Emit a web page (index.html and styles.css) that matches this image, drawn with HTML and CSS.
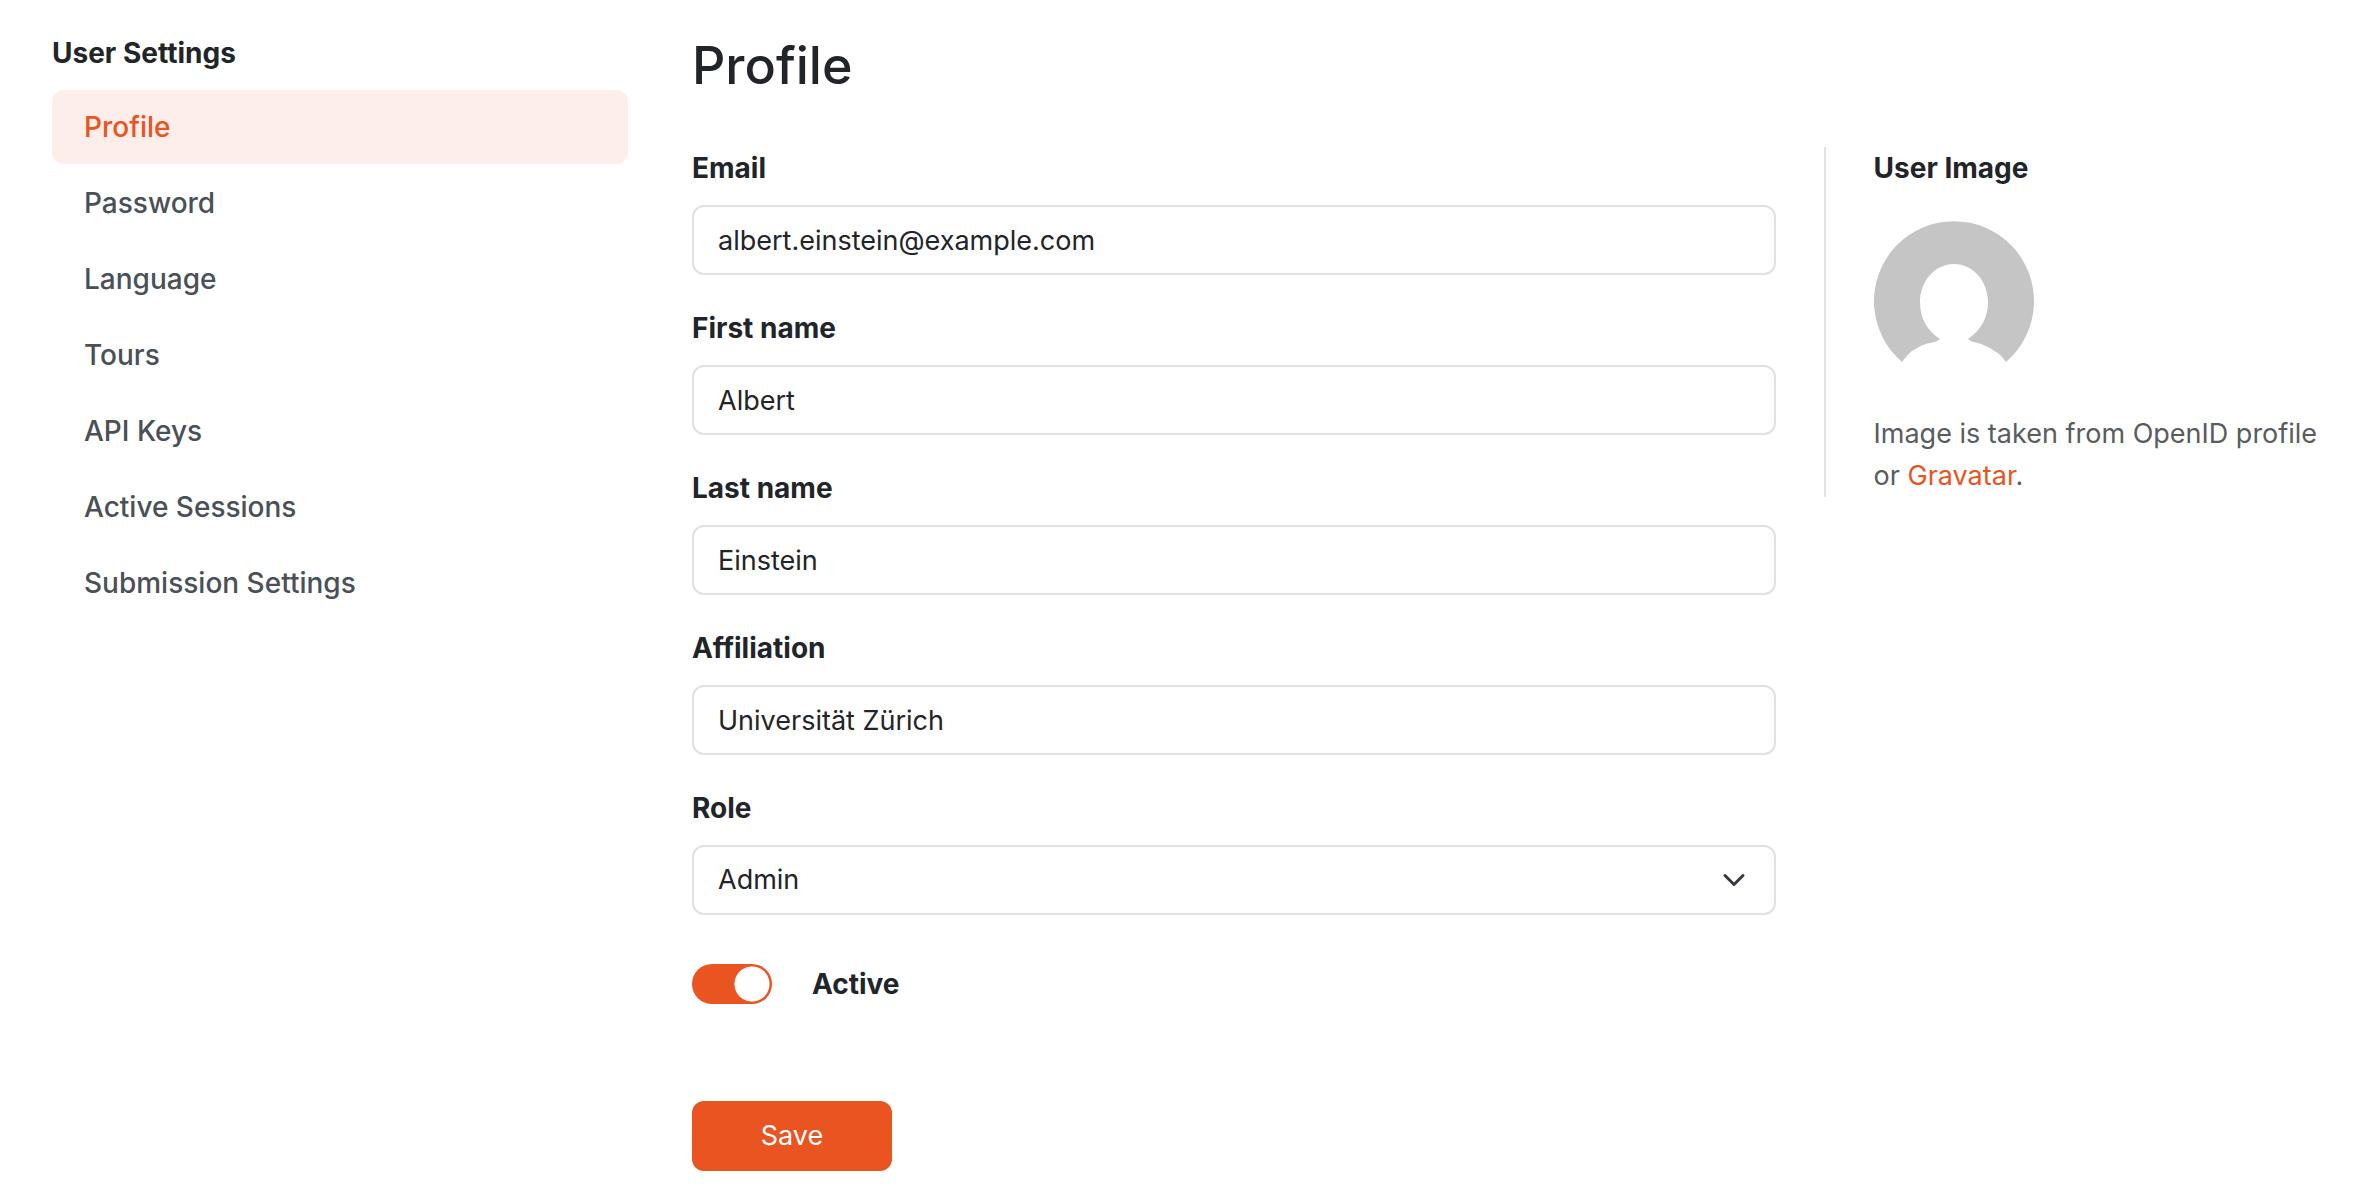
FILE: index.html
```html
<!DOCTYPE html>
<html lang="en">

<head>
    <meta charset="utf-8">
    <meta name="viewport" content="width=device-width, initial-scale=1.0">
    <title>User Settings</title>
    <link rel="stylesheet" href="styles.css">
</head>

<body>
    <div class="page">
        <nav class="sidebar">
            <h2 class="sidebar-title">User Settings</h2>
            <a class="nav-link active" href="#profile">Profile</a>
            <a class="nav-link" href="#password">Password</a>
            <a class="nav-link" href="#language">Language</a>
            <a class="nav-link" href="#tours">Tours</a>
            <a class="nav-link" href="#api-keys">API Keys</a>
            <a class="nav-link" href="#active-sessions">Active Sessions</a>
            <a class="nav-link" href="#submission-settings">Submission Settings</a>
        </nav>

        <main class="content">
            <h1>Profile</h1>
            <div class="columns">
                <form class="profile-form">
                    <div class="form-group">
                        <label for="email">Email</label>
                        <input class="form-control" type="email" id="email" value="albert.einstein@example.com">
                    </div>
                    <div class="form-group">
                        <label for="firstName">First name</label>
                        <input class="form-control" type="text" id="firstName" value="Albert">
                    </div>
                    <div class="form-group">
                        <label for="lastName">Last name</label>
                        <input class="form-control" type="text" id="lastName" value="Einstein">
                    </div>
                    <div class="form-group">
                        <label for="affiliation">Affiliation</label>
                        <input class="form-control" type="text" id="affiliation" value="Universität Zürich">
                    </div>
                    <div class="form-group">
                        <label for="role">Role</label>
                        <div class="select-wrap">
                            <select class="form-control" id="role">
                                <option selected>Admin</option>
                            </select>
                            <svg class="chevron" viewBox="0 0 16 16" aria-hidden="true">
                                <path d="m2 5 6 6 6-6" />
                            </svg>
                        </div>
                    </div>
                    <div class="form-switch">
                        <input class="switch" type="checkbox" id="active" checked>
                        <label for="active">Active</label>
                    </div>
                    <button class="save" type="submit">Save</button>
                </form>

                <aside class="user-image">
                    <h2>User Image</h2>
                    <svg class="avatar" viewBox="0 0 160 160" role="img" aria-label="User image">
                        <path class="avatar-bg" d="M28 141A80 80 0 1 1 132 141C129 137 126 133 122 131C115 126 110 124 104 122C99 121 96 120 94 118C107 109 114 97 114 81C114 60 99 43 80 43C61 43 46 60 46 81C46 97 53 110 66 118C64 120 61 121 56 122C49 123 43 127 38 130C34 133 31 137 28 141Z" />
                    </svg>
                    <p>Image is taken from OpenID profile or <a href="https://gravatar.com">Gravatar</a>.</p>
                </aside>
            </div>
        </main>
    </div>
</body>

</html>
```
FILE: styles.css
```css
* {
    box-sizing: border-box;
}

body {
    margin: 0;
    background: #fff;
    color: #212529;
    font-family: Inter, "Liberation Sans", sans-serif;
    font-size: 27px;
    line-height: 42px;
}

h1,
h2,
p {
    margin: 0;
}

h1 {
    margin-bottom: 48px;
    font-size: 52px;
    font-weight: 500;
    line-height: 67px;
}

h2 {
    font-size: 28px;
    font-weight: 700;
    line-height: 42px;
}

a {
    color: #e95420;
    text-decoration: none;
}

.page {
    display: grid;
    grid-template-columns: 25% 1fr;
    gap: 64px;
    padding: 32px 16px 32px 52px;
}

.sidebar {
    display: flex;
    flex-direction: column;
    gap: 2px;
}

.sidebar-title {
    margin-bottom: 14px;
}

.nav-link {
    padding: 16px 32px;
    border-radius: 12px;
    color: #495057;
    font-size: 28px;
    font-weight: 500;
}

.nav-link.active {
    background: #fdeee9;
    color: #e95420;
}

.columns {
    display: grid;
    grid-template-columns: 1fr 32%;
    gap: 48px;
    align-items: start;
}

.form-group {
    margin-bottom: 32px;
}

label {
    display: block;
    font-size: 28px;
    font-weight: 700;
}

.form-control {
    display: block;
    width: 100%;
    height: 70px;
    margin-top: 16px;
    padding: 12px 24px;
    border: 2px solid #dee2e6;
    border-radius: 12px;
    background: #fff;
    color: #212529;
    font: inherit;
    appearance: none;
}

.select-wrap {
    position: relative;
}

.chevron {
    position: absolute;
    right: 30px;
    bottom: 23px;
    width: 24px;
    height: 24px;
    fill: none;
    stroke: #343a40;
    stroke-width: 2;
    stroke-linecap: round;
    stroke-linejoin: round;
    pointer-events: none;
}

.form-switch {
    display: flex;
    align-items: center;
    gap: 40px;
    margin: 48px 0 96px;
}

.switch {
    width: 80px;
    height: 40px;
    margin: 0;
    border-radius: 20px;
    background: radial-gradient(circle at 60px 20px, #fff 17px, #e95420 18px);
    appearance: none;
}

.switch:not(:checked) {
    background: radial-gradient(circle at 20px 20px, #fff 17px, #adb5bd 18px);
}

.save {
    width: 200px;
    height: 70px;
    border: 0;
    border-radius: 12px;
    background: #e95420;
    color: #fff;
    font: inherit;
    cursor: pointer;
}

.user-image {
    padding: 0 32px 0 48px;
    border-left: 2px solid #dee2e6;
    color: #595c5f;
}

.user-image h2 {
    color: #212529;
}

.avatar {
    display: block;
    width: 160px;
    height: 160px;
    margin: 32px 0;
}

.avatar-bg {
    fill: #c5c5c5;
}
```
